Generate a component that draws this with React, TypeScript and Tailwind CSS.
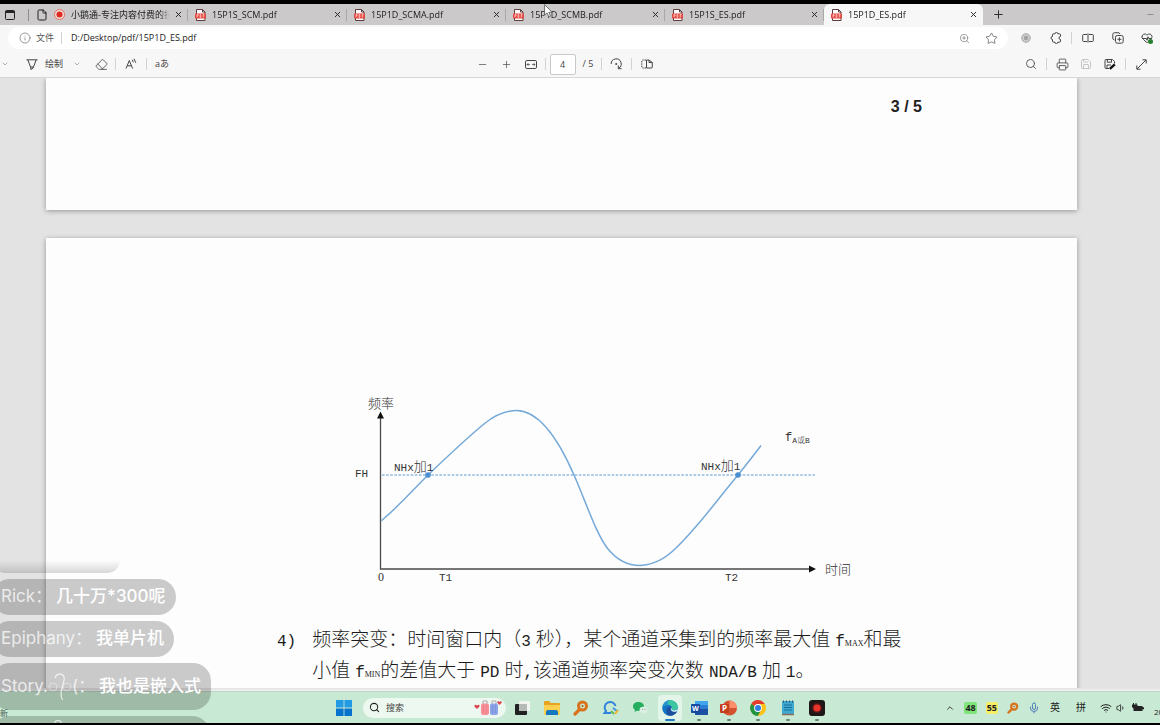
import { useState, type ReactNode } from "react";
import {
  ChevronDown,
  ChevronUp,
  Eraser,
  File,
  HeartPulse,
  Info,
  Mic,
  Minus,
  Plus,
  Printer,
  Save,
  Search,
  Settings,
  Star,
  Volume1,
  Wifi,
  X,
  ZoomIn,
} from "lucide-react";

type Tab = { id: string; title: string; kind: "page" | "pdf" };

const TABS: Tab[] = [
  { id: "course", title: "小鹅通-专注内容付费的技术", kind: "page" },
  { id: "1s-scm", title: "15P1S_SCM.pdf", kind: "pdf" },
  { id: "1d-scma", title: "15P1D_SCMA.pdf", kind: "pdf" },
  { id: "1d-scmb", title: "15P1D_SCMB.pdf", kind: "pdf" },
  { id: "1s-es", title: "15P1S_ES.pdf", kind: "pdf" },
  { id: "1d-es", title: "15P1D_ES.pdf", kind: "pdf" },
];

function PdfIcon() {
  return (
    <svg className="h-3 w-[11px] shrink-0" viewBox="0 0 11 12" aria-hidden="true">
      <path d="M1.500.5h6l2.500 2.500v8.500h-8.500z" fill="#fff" stroke="#5b3b3b" />
      <path d="M7.500.5v2.500H10" fill="none" stroke="#5b3b3b" />
      <rect y="4.500" width="11" height="5" rx=".8" fill="#e5473e" />
      <path d="M2 8.500v-3h1v1.500H2M5 5.500v3h.8v-3zM8.200 8.500v-3H9.500M8.200 7H9.300" fill="none" stroke="#ffd9d6" strokeWidth=".7" />
    </svg>
  );
}

function Divider() {
  return <span className="h-3 w-px shrink-0 bg-[#d2d2d2]" />;
}

function IconButton({ label, className = "w-6", children }: { label: string; className?: string; children: ReactNode }) {
  return (
    <button type="button" aria-label={label} className={`flex h-5 shrink-0 items-center justify-center ${className}`}>
      {children}
    </button>
  );
}

function TabStrip() {
  const [active, setActive] = useState("1d-es");

  return (
    <div className="flex h-[21px] shrink-0 items-center bg-[#cbc9c9]">
      <IconButton label="标签页操作" className="w-[28px] pr-2">
        <svg className="h-[10px] w-[10px]" viewBox="0 0 10 10" fill="none" stroke="#222">
          <rect x=".5" y=".5" width="9" height="9" rx="1" />
          <path d="M.5 2h9" strokeWidth="2" />
        </svg>
      </IconButton>
      <span className="h-3 w-px shrink-0 bg-[#8f8d8d]" />
      {TABS.map((tab) => {
        const isActive = tab.id === active;
        return (
          <div
            key={tab.id}
            className={`flex h-full w-[159px] min-w-0 items-center pl-[7px] ${isActive ? "rounded-t-md bg-[#f7f7f7]" : ""}`}
          >
            {tab.kind === "page" ? (
              <>
                <File size={12} strokeWidth={2} className="shrink-0" />
                <svg className="mx-[6px] h-[11px] w-[11px] shrink-0" viewBox="0 0 11 11" aria-hidden="true">
                  <circle cx="5.500" cy="5.500" r="5" fill="#f3dedb" stroke="#e4705f" />
                  <circle cx="5.500" cy="5.500" r="3" fill="#dd2c1f" />
                </svg>
              </>
            ) : (
              <span className="mr-[6px]">
                <PdfIcon />
              </span>
            )}
            <button
              type="button"
              onClick={() => setActive(tab.id)}
              className="min-w-0 flex-1 overflow-hidden mask-r-from-90% text-left text-[9px] leading-4 whitespace-nowrap"
            >
              {tab.title}
            </button>
            <button type="button" aria-label={`关闭 ${tab.title}`} className="flex w-[17px] shrink-0 justify-center">
              <X size={9} strokeWidth={2.500} />
            </button>
            <span className={`h-3 w-px ${isActive ? "bg-transparent" : "bg-[#a9a7a7]"}`} />
          </div>
        );
      })}
      <IconButton label="新建标签页" className="w-[30px]">
        <Plus size={13} strokeWidth={1.700} />
      </IconButton>
      <IconButton label="最小化" className="mr-[5px] ml-auto">
        <Minus size={9} className="text-[#777]" />
      </IconButton>
    </div>
  );
}

function AddressBar() {
  const [url, setUrl] = useState("D:/Desktop/pdf/15P1D_ES.pdf");

  return (
    <div className="flex h-[26px] shrink-0 items-center bg-[#f7f7f7] pl-2 text-[#444]">
      <div className="flex h-[22px] min-w-0 flex-1 items-center rounded-full bg-white pl-[11px] text-[9px]">
        <Info size={12} strokeWidth={1.500} className="text-[#777]" />
        <label htmlFor="url" className="mr-[7px] ml-[5px] text-[#555]">
          文件
        </label>
        <Divider />
        <input
          id="url"
          value={url}
          onChange={(e) => setUrl(e.target.value)}
          className="ml-[9px] min-w-0 flex-1 text-[9px] text-[#222] outline-none"
        />
        <IconButton label="缩放" className="w-[27px]">
          <ZoomIn size={11} strokeWidth={1.500} className="text-[#777]" />
        </IconButton>
        <IconButton label="收藏" className="mr-[3px] w-[27px]">
          <Star size={13} strokeWidth={1.500} className="text-[#666]" />
        </IconButton>
      </div>
      <div className="ml-[3px] flex shrink-0 items-center">
        <IconButton label="扩展网站" className="w-[30px]">
          <svg className="h-[10px] w-[10px]" viewBox="0 0 10 10">
            <circle cx="5" cy="5" r="4.300" fill="#cfcfcf" stroke="#a5a5a5" />
            <path d="M3 3.500 5 2.500l2 1v3l-2 1-2-1z" fill="#a3a3a3" />
          </svg>
        </IconButton>
        <IconButton label="扩展" className="w-[30px]">
          <svg className="h-3 w-3" viewBox="0 0 12 12" fill="none" stroke="currentColor" strokeLinejoin="round">
            <path d="M3.500 1.800H5a1.400 1.400 0 0 1 2.800 0H9.500a1 1 0 0 1 1 1V4.500a1.500 1.500 0 0 0 0 3V9.200a1 1 0 0 1-1 1H7.800a1.400 1.400 0 0 1-2.800 0H3.500a1 1 0 0 1-1-1V7.500a1.500 1.500 0 0 1 0-3V2.800a1 1 0 0 1 1-1z" />
          </svg>
        </IconButton>
        <Divider />
        <IconButton label="分屏" className="w-[31px]">
          <svg className="h-[10px] w-[12px]" viewBox="0 0 12 10" fill="none" stroke="currentColor">
            <path d="M5 1.500H1.500a.8.8 0 0 0-.8.8v5.400a.8.8 0 0 0 .8.8H5M7 1.500h3.500a.8.8 0 0 1 .8.8v5.400a.8.8 0 0 1-.8.8H7M6 .3v9.400" />
          </svg>
        </IconButton>
        <IconButton label="集锦" className="w-[30px]">
          <svg className="h-3 w-3" viewBox="0 0 12 12" fill="none" stroke="currentColor">
            <path d="M2.500 8A2 2 0 0 1 .8 6V2.500A1.800 1.800 0 0 1 2.600.7H6A2 2 0 0 1 8 2" />
            <rect x="3.500" y="3.500" width="7.700" height="7.700" rx="1.800" />
            <path d="M7.400 5.300v4M5.400 7.300h4" />
          </svg>
        </IconButton>
        <IconButton label="浏览器健康" className="relative w-[27px]">
          <HeartPulse size={12} />
          <span className="absolute right-[7px] bottom-[4px] h-[5px] w-[5px] rounded-full bg-[#26802c]" />
        </IconButton>
      </div>
    </div>
  );
}

function PdfToolbar() {
  const [page, setPage] = useState("4");

  return (
    <div className="grid h-[27px] shrink-0 grid-cols-[1fr_auto_1fr] items-center border-b border-[#d6d6d6] bg-[#f7f7f7] text-[9px] text-[#444]">
      <div className="flex items-center">
        <IconButton label="更多" className="w-[10px]">
          <ChevronDown size={8} className="text-[#888]" />
        </IconButton>
        <button type="button" className="ml-4 flex items-center gap-[7px]">
          <svg className="h-[11px] w-[12px]" viewBox="0 0 12 11" fill="none" stroke="currentColor">
            <path d="M.5.8h11M1.800.8 4.500 8h3L10.200.8M4.800 8v2.500L7.200 9V8" />
          </svg>
          绘制
        </button>
        <IconButton label="绘制选项" className="w-[27px]">
          <ChevronDown size={8} className="text-[#888]" />
        </IconButton>
        <IconButton label="擦除" className="w-[22px]">
          <Eraser size={13} strokeWidth={1.500} />
        </IconButton>
        <span className="mx-[3px] flex">
          <Divider />
        </span>
        <IconButton label="朗读此页内容">
          <svg className="h-3 w-3" viewBox="0 0 12 12" fill="none" stroke="currentColor">
            <path d="M1 10.500 4.300 2.500 7.600 10.500M2.200 7.800h4.200M7.300 1.800 8.300 4.300M9 .8 10.800 4.800" />
          </svg>
        </IconButton>
        <span className="mx-[3px] flex">
          <Divider />
        </span>
        <button type="button" aria-label="翻译" className="ml-[5px] text-[9px]">
          aあ
        </button>
      </div>
      <div className="flex items-center pr-7">
        <IconButton label="缩小">
          <Minus size={11} strokeWidth={1.500} />
        </IconButton>
        <IconButton label="放大">
          <Plus size={11} strokeWidth={1.500} />
        </IconButton>
        <IconButton label="适应宽度">
          <svg className="h-[9px] w-[12px]" viewBox="0 0 12 9" fill="none" stroke="currentColor">
            <rect x=".5" y=".5" width="11" height="8" rx="1.300" />
            <path d="M2 4.500h2.800M7.200 4.500H10M3.300 3.200 2 4.500l1.300 1.300M8.700 3.200 10 4.500 8.700 5.800" strokeWidth=".8" />
          </svg>
        </IconButton>
        <span className="mr-1 ml-[2px] flex">
          <Divider />
        </span>
        <input
          aria-label="页码"
          value={page}
          onChange={(e) => setPage(e.target.value)}
          className="h-[21px] w-[26px] rounded-xs border border-[#c9c9c9] bg-white text-center text-[9px] outline-none"
        />
        <span className="mr-2 ml-[7px]">/ 5</span>
        <Divider />
        <IconButton label="旋转" className="w-[29px]">
          <svg className="h-3 w-[13px]" viewBox="0 0 13 12" fill="none" stroke="currentColor">
            <path d="M1.200 6A5 5 0 1 1 8.500 10.300M8.300 7.500v3.200h3.200" />
            <circle cx="6.200" cy="6" r="1" fill="currentColor" stroke="none" />
          </svg>
        </IconButton>
        <Divider />
        <IconButton label="页面视图" className="w-[29px]">
          <svg className="h-[10px] w-[12px]" viewBox="0 0 12 10" fill="none" stroke="currentColor">
            <path d="M5 1H1.800a1 1 0 0 0-1 1v6a1 1 0 0 0 1 1H5" strokeDasharray="1.500 .8" />
            <path d="M5.500 1h2.500v2.500h3.300V8a1 1 0 0 1-1 1H5.500zM8 1l3.300 2.500" />
          </svg>
        </IconButton>
      </div>
      <div className="-mr-[10px] flex items-center justify-end">
        <IconButton label="查找">
          <Search size={12} strokeWidth={1.700} />
        </IconButton>
        <span className="mx-[3px] flex">
          <Divider />
        </span>
        <IconButton label="打印">
          <Printer size={13} strokeWidth={1.500} />
        </IconButton>
        <IconButton label="保存">
          <Save size={12} strokeWidth={1.500} className="text-[#b5b5b5]" />
        </IconButton>
        <IconButton label="另存为">
          <svg className="h-3 w-3" viewBox="0 0 12 12" fill="none" stroke="currentColor">
            <path d="M5 10.500H2a1 1 0 0 1-1-1v-7a1 1 0 0 1 1-1h6.500l2 2v2M3.300 1.500v2.700h4.200V1.500M3 10.500V7h4" />
            <path d="m5.800 10.800 5-4.500" stroke="#111" strokeWidth="2.400" />
          </svg>
        </IconButton>
        <span className="mx-[3px] flex">
          <Divider />
        </span>
        <IconButton label="全屏">
          <svg className="h-[11px] w-[11px]" viewBox="0 0 11 11" fill="none" stroke="currentColor">
            <path d="M6.500.8h3.700v3.700M4.500 10.200H.8V6.500M10 1 1 10" />
          </svg>
        </IconButton>
        <IconButton label="设置" className="w-[17px] pl-[6px]">
          <Settings size={11} strokeWidth={1.500} />
        </IconButton>
      </div>
    </div>
  );
}

function FrequencyChart() {
  return (
    <svg
      className="block h-[200px] w-[520px]"
      viewBox="346 390 520 200"
      fill="#333"
      fontFamily="'Noto Sans CJK SC', sans-serif"
      fontSize="13"
      fontWeight="300"
    >
      <path d="M380.500 417V569H809" fill="none" stroke="#4a4a4a" strokeWidth="1.300" />
      <path d="M380.500 411.500l3.500 7h-7zM816 569l-7-3.500v7z" fill="#111" />
      <path d="M382 475H815" fill="none" stroke="#5b9bd5" strokeWidth="1.200" strokeDasharray="2.600 1.500" />
      <path
        d="M381 521C398 507 412 491 428 475C450 454 468 437 484 424C495 415 506 410.500 517 410.500C540 411 560 443 574 475C586 502 596 534 608 549C617 560 628 565.500 640 565.500C652 565 664 560 676 548C698 527 718 499 738 475C746 465 754 455 761 445.500"
        fill="none"
        stroke="#75a9d8"
        strokeWidth="1.500"
      />
      <circle cx="428" cy="475" r="2.800" fill="#4b8fd0" />
      <circle cx="738" cy="475" r="2.800" fill="#4b8fd0" />
      <text x="368" y="408">频率</text>
      <text x="825" y="574">时间</text>
      <g fontFamily="'Liberation Mono', 'Noto Sans CJK SC', monospace" fontSize="11">
        <text x="355" y="477">FH</text>
        <text x="439" y="581">T1</text>
        <text x="725" y="581">T2</text>
        <text x="394" y="471">
          NHx<tspan fontSize="13">加</tspan>1
        </text>
        <text x="701" y="470">
          NHx<tspan fontSize="13">加</tspan>1
        </text>
        <text x="785" y="441" fontSize="12">
          f<tspan y="443" fontSize="8">A或B</tspan>
        </text>
      </g>
      <text x="378" y="581" fontFamily="'Liberation Serif', serif" fontSize="12">
        0
      </text>
    </svg>
  );
}

function Latin({ children }: { children: ReactNode }) {
  return <span className="font-['Liberation_Mono',monospace] text-[16px] leading-none">{children}</span>;
}

function Subscript({ children }: { children: ReactNode }) {
  return <span className="font-['Liberation_Serif',serif] text-[8px] leading-none">{children}</span>;
}

function Viewer() {
  return (
    <main className="min-h-0 flex-1 overflow-hidden border-b-2 border-[#e6e6e6] bg-[#e3e3e3] pr-[83px] pl-[46px]">
      <section className="flex h-[132px] justify-end bg-[#fdfdfd] pt-[17px] pr-[155px] shadow-[0_1px_5px_rgba(0,0,0,0.35)]">
        <p className="font-['Liberation_Sans',sans-serif] text-base leading-6 font-bold">3 / 5</p>
      </section>
      <section className="mt-[28px] h-[600px] bg-[#fdfdfd] pt-[152px] shadow-[0_1px_5px_rgba(0,0,0,0.35)]">
        <div className="pl-[300px]">
          <FrequencyChart />
        </div>
        <div className="mt-[34px] flex gap-4 pl-[231px] text-[19px] leading-[31px] font-light whitespace-nowrap text-[#1c1c1c]">
          <p>
            <Latin>4)</Latin>
          </p>
          <p>
            频率突变：时间窗口内（<Latin>3</Latin> 秒），某个通道采集到的频率最大值 <Latin>f</Latin>
            <Subscript>MAX</Subscript>和最
            <br />
            小值 <Latin>f</Latin>
            <Subscript>MIN</Subscript>的差值大于 <Latin>PD</Latin> 时<Latin>,</Latin>该通道频率突变次数 <Latin>NDA/B</Latin> 加{" "}
            <Latin>1</Latin>。
          </p>
        </div>
      </section>
    </main>
  );
}

function ChatBubble({ name, message, tall = false }: { name: ReactNode; message: string; tall?: boolean }) {
  return (
    <div
      className={`flex w-fit items-center gap-1 rounded-[18px] bg-black/20 pr-[10px] pl-[9px] text-[17px] whitespace-nowrap text-white ${tall ? "h-[47px]" : "h-9"}`}
    >
      <span className="flex items-center text-white/75">{name}</span>
      <span className="font-medium">{message}</span>
    </div>
  );
}

function Curl() {
  return (
    <svg className="-mx-[5px] h-7 w-[14px]" viewBox="0 0 14 28" fill="none" stroke="currentColor" strokeWidth="1.200">
      <path d="M2 5C3 1.500 6 .8 8 1.200c4 1 3.500 5 2.500 8L8.500 17c-1 4-.5 7 1 10" />
    </svg>
  );
}

function LiveChat() {
  return (
    <div className="pointer-events-none absolute bottom-0 -left-2 flex flex-col gap-[6px] font-['Inter','Noto_Sans_CJK_SC',sans-serif]">
      <div className="h-[13px] w-[128px] rounded-b-[18px] bg-linear-to-b from-transparent to-black/15" />
      <ChatBubble name="Rick：" message="几十万*300呢" />
      <ChatBubble name="Epiphany：" message="我单片机" />
      <ChatBubble
        tall
        name={
          <>
            Story.
            <svg className="h-[10px] w-[10px] text-white/40" viewBox="0 0 10 10" fill="none" stroke="currentColor">
              <circle cx="5" cy="5" r="4" />
            </svg>
            <Curl />
            <svg className="h-[10px] w-[10px] text-white/40" viewBox="0 0 10 10" fill="none" stroke="currentColor">
              <circle cx="5" cy="5" r="4" />
            </svg>
            (：
          </>
        }
        message="我也是嵌入式"
      />
      <div className="h-[7px] w-[218px] overflow-hidden">
        <div className="h-9 rounded-[18px] bg-black/20 pl-[62px]">
          <span className="block h-4 w-2 translate-y-1 rounded-t-full border border-b-0 border-white/80" />
        </div>
      </div>
    </div>
  );
}

function MagnifierIcon({ className }: { className: string }) {
  return (
    <svg className={className} viewBox="0 0 16 16" fill="none" stroke="#d9721b" aria-hidden="true">
      <circle cx="9.500" cy="6" r="4" strokeWidth="3" />
      <circle cx="9.500" cy="6" r="1" fill="#a84e08" stroke="none" />
      <path d="M6.500 9.500 2 14" strokeWidth="3.200" strokeLinecap="round" />
    </svg>
  );
}

type TaskItem = { name: string; running?: boolean; active?: boolean; icon: ReactNode };

const TASK_ITEMS: TaskItem[] = [
  {
    name: "任务视图",
    icon: (
      <svg className="h-4 w-4" viewBox="0 0 16 16">
        <rect x="5" y="1" width="11" height="10" rx="1" fill="#f1f4f1" />
        <rect x="1" y="4" width="12" height="11" rx="1" fill="#222" />
        <path d="M5 4h8v7H5z" fill="#b5bab6" />
      </svg>
    ),
  },
  {
    name: "文件资源管理器",
    icon: (
      <svg className="h-4 w-[18px]" viewBox="0 0 18 16">
        <path d="M1 2a1 1 0 0 1 1-1h4l2 2h8a1 1 0 0 1 1 1v10H1z" fill="#e5a320" />
        <path d="M1 5h16v9a1 1 0 0 1-1 1H2a1 1 0 0 1-1-1z" fill="#fcd04f" />
        <path d="M3 15v-3a2 2 0 0 1 2-2h8a2 2 0 0 1 2 2v3z" fill="#1878bd" />
      </svg>
    ),
  },
  { name: "Everything", icon: <MagnifierIcon className="h-4 w-4" /> },
  {
    name: "聊天",
    icon: (
      <svg className="h-4 w-[18px]" viewBox="0 0 18 16" fill="none" strokeWidth="2">
        <path d="M9 13H2.500L4 11A5.500 5.500 0 1 1 13.500 6" stroke="#3184dc" />
        <path d="m11 8 4 3" stroke="#3b98e6" />
        <path d="m16 10-3 4" stroke="#f1b62d" />
        <path d="m9 11 3 3" stroke="#62b75a" />
      </svg>
    ),
  },
  {
    name: "微信",
    icon: (
      <svg className="h-4 w-4" viewBox="0 0 16 16">
        <path d="M6.500 2C3 2 1 4 1 6.500c0 1.500.8 2.700 2 3.500l-.5 2L5 10.800c4.500.7 7-1.300 7-4.300S9.500 2 6.500 2z" fill="#25ae60" />
        <ellipse cx="11.500" cy="10" rx="4" ry="3.300" fill="#dcefe3" />
        <path d="M10 9.300h.8M12.500 9.300h.8" stroke="#777" />
      </svg>
    ),
  },
  {
    name: "Microsoft Edge",
    active: true,
    icon: (
      <svg className="h-4 w-4" viewBox="0 0 16 16">
        <circle cx="8" cy="8" r="7.800" fill="#1475c4" />
        <path d="M.5 7C1.500 2.500 5 0 8.500.2 13 .4 16 3.500 15.800 7c-.2 2.500-2.300 3.500-4.300 3.300-1.500-.1-2.300-.8-1.700-1.500C11 6.500 8 4.500 5 5 3 5.200 1.300 6 .5 7z" fill="#3cc7a0" />
        <path d="M.5 7C1.500 2.500 4.500.5 7.500.3 5 2 5.500 4.500 8 5 4.500 4.500 2 5 .5 7z" fill="#2497d3" />
        <path d="M5.500 15C4 12 3.500 8.500 7.800 6.500 9.500 7 9.800 8 9.300 9c-.5 2 .5 3 2.700 3.100 1.200.1 2.400-.2 3.200-.8-2 4-6.500 5.500-9.700 3.700z" fill="#1c4f9c" />
        <path d="M9.600 7.500c.4 1-.6 1.500.4 2.300 1.500 1 4.500.7 5.600-.8v1.500c-1.500 2-5.500 1.700-6.600-.5-.5-1-.1-2 .6-2.500z" fill="#e3f5f2" />
      </svg>
    ),
  },
  {
    name: "Word",
    running: true,
    icon: (
      <svg className="h-4 w-[17px]" viewBox="0 0 17 16">
        <rect x="4" y="1" width="13" height="14" rx="1.200" fill="#2b7cd3" />
        <path d="M4 1h13v4H4z" fill="#41a5ee" />
        <path d="M4 9h13v5a1 1 0 0 1-1 1H5a1 1 0 0 1-1-1z" fill="#1b4fa3" />
        <rect y="4" width="9" height="9" rx="1" fill="#164aa0" />
        <text x="4.500" y="11" fill="#fff" fontSize="7" fontWeight="700" textAnchor="middle">
          W
        </text>
      </svg>
    ),
  },
  {
    name: "PowerPoint",
    running: true,
    icon: (
      <svg className="h-4 w-[17px]" viewBox="0 0 17 16">
        <circle cx="9.500" cy="8" r="7.500" fill="#d35230" />
        <path d="M9.500.5A7.500 7.500 0 0 1 17 8H9.500z" fill="#ff8f6b" />
        <rect y="4" width="9" height="9" rx="1" fill="#c43e1c" />
        <text x="4.500" y="11" fill="#fff" fontSize="8" fontWeight="700" textAnchor="middle">
          P
        </text>
      </svg>
    ),
  },
  {
    name: "Google Chrome",
    running: true,
    icon: (
      <svg className="h-4 w-4" viewBox="0 0 16 16">
        <circle cx="8" cy="8" r="7.800" fill="#fbc116" />
        <path d="M8 8 1.200 4.100A7.800 7.800 0 0 1 14.800 4.100z" fill="#e33b2e" />
        <path d="M8 8 1.200 4.100A7.800 7.800 0 0 0 8 15.800l3.400-5.900z" fill="#229342" />
        <path d="M8 4.100h6.800A7.800 7.800 0 0 1 8 15.800l3.400-5.900z" fill="#fbc116" />
        <circle cx="8" cy="8" r="3.900" fill="#fff" />
        <circle cx="8" cy="8" r="3" fill="#2f7de1" />
      </svg>
    ),
  },
  {
    name: "记事本",
    running: true,
    icon: (
      <svg className="h-4 w-[14px]" viewBox="0 0 14 16">
        <rect x="1" y="1" width="12" height="13" rx="1" fill="#3eaad2" />
        <path d="M1 14.500h12" stroke="#8a6a5b" strokeWidth="1.500" />
        <path d="M3 5h8M3 7.500h8M3 10h8" stroke="#176f98" strokeWidth="1.200" />
        <path d="M2.500.5v2M5.500.5v2M8.500.5v2M11.500.5v2" stroke="#285366" />
      </svg>
    ),
  },
  {
    name: "录屏",
    running: true,
    icon: (
      <svg className="h-4 w-4" viewBox="0 0 16 16">
        <rect width="16" height="16" rx="3" fill="#1d1717" />
        <circle cx="8" cy="8" r="5" fill="#5e1714" />
        <circle cx="8" cy="8" r="3.500" fill="#e8352c" />
      </svg>
    ),
  },
];

function Taskbar() {
  return (
    <footer className="grid h-[32px] shrink-0 grid-cols-[1fr_auto_1fr] items-center border-t border-[#b9d3c2] bg-[#c8e9d3]">
      <span className="self-end pb-1 text-[8px] leading-3 text-[#4d6355]">新</span>
      <div className="flex items-center pl-[5px]">
        <button type="button" aria-label="开始">
          <svg className="h-4 w-4" viewBox="0 0 16 16">
            <path d="M0 0h7.600v7.600H0zM8.400 0H16v7.600H8.400z" fill="#239be4" />
            <path d="M0 8.400h7.600V16H0zM8.400 8.400H16V16H8.400z" fill="#0873cf" />
          </svg>
        </button>
        <div className="mr-1 ml-[11px] flex h-5 w-[143px] items-center rounded-full bg-[#edf8f0] pr-1 pl-[6px]">
          <Search size={11} strokeWidth={2.200} className="shrink-0" />
          <input
            aria-label="搜索"
            placeholder="搜索"
            className="ml-[6px] min-w-0 flex-1 text-[9px] outline-none placeholder:text-[#444]"
          />
          <svg className="h-[16px] w-[28px] shrink-0" viewBox="0 0 28 16" aria-hidden="true">
            <path d="M3 9 .7 6.700C-.3 5 2 4 3 5.700 4 4 6.300 5 5.300 6.700z" fill="#d8434e" />
            <path d="M25.500 5 23.500 3c-.8-1.500 1.300-2.300 2-1 .8-1.300 3-.4 2 1z" fill="#d8434e" />
            <path d="M9 4V1h4v3M18 4V1h4v3" fill="none" stroke="#aaa" />
            <rect x="7" y="3.500" width="8" height="11.500" rx="2" fill="#f78e98" />
            <rect x="16" y="3.500" width="8" height="11.500" rx="2" fill="#8da5e8" />
            <path d="M9.500 5v8M12.500 5v8" stroke="#ee808b" />
            <path d="M18.500 5v8M21.500 5v8" stroke="#7b93d9" />
          </svg>
        </div>
        <div className="flex w-[319px] items-center justify-between">
          {TASK_ITEMS.map((item) => (
            <button
              key={item.name}
              type="button"
              aria-label={item.name}
              className={`relative flex h-[26px] w-6 items-center justify-center rounded-sm ${item.active ? "bg-[#e3f5e9]" : ""}`}
            >
              {item.icon}
              {item.active && <span className="absolute bottom-0 h-[2px] w-[10px] rounded-full bg-[#2578c2]" />}
              {item.running && <span className="absolute bottom-0 h-[2px] w-1 rounded-full bg-[#6c8475]" />}
            </button>
          ))}
        </div>
      </div>
      <div className="flex items-center justify-end text-[10px] text-[#222]">
        <ChevronUp size={10} className="mr-[9px]" />
        <span className="mr-[9px] rounded-xs bg-[#7fe57b] px-px text-[9px] leading-3 font-bold">48</span>
        <span className="mr-[9px] rounded-xs bg-[#f6ee66] px-px text-[9px] leading-3 font-bold">55</span>
        <MagnifierIcon className="mr-[9px] h-3 w-3" />
        <Mic size={12} className="mr-[10px] text-[#5281b8]" />
        <span className="mr-[16px]">英</span>
        <span className="mr-[14px]">拼</span>
        <Wifi size={12} className="mr-[4px]" />
        <Volume1 size={10} className="mr-[6px]" />
        <svg className="mr-[10px] h-[9px] w-[12px]" viewBox="0 0 12 9" aria-label="电池">
          <path d="M1.500 0v2M4 0v2" stroke="#222" />
          <path d="M0 1.500h5.500v1.500H10.500V4.300H12v2h-1.500V8h-9V5.500L0 4z" fill="#222" />
        </svg>
        <span className="w-[6px] self-end pt-2 text-[8px] leading-3 whitespace-nowrap">20</span>
      </div>
    </footer>
  );
}

export default function App() {
  return (
    <div className="relative flex h-screen flex-col overflow-hidden border-t-4 border-b-2 border-black bg-white font-['Open_Sans','Noto_Sans_CJK_SC',sans-serif] text-[#222]">
      <TabStrip />
      <AddressBar />
      <PdfToolbar />
      <Viewer />
      <div className="h-px shrink-0 bg-[#f3f3f3]" />
      <Taskbar />
      <LiveChat />
      {/* Mouse pointer over the tab strip */}
      <svg className="pointer-events-none absolute top-0 left-[544px] h-[14px] w-[9px]" viewBox="0 0 9 14" aria-hidden="true">
        <path d="M.6.6v10.600l2.500-2.300 1.700 4 1.700-.8-1.700-3.800h3.400z" fill="#fff" stroke="#555" strokeWidth=".8" />
      </svg>
    </div>
  );
}
